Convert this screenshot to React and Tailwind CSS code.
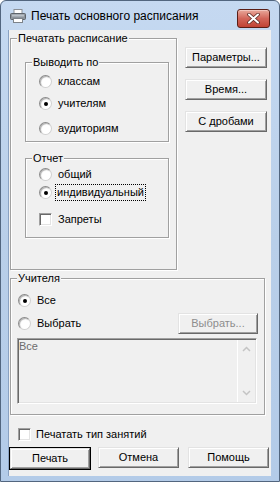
import React from 'react';

const btn =
  'h-[21px] flex items-center justify-center bg-[#f0f0f0] border border-t-[#e3e3e3] border-l-[#e3e3e3] border-r-[#696969] border-b-[#696969] shadow-[inset_1px_1px_0_#fff,inset_-1px_-1px_0_#a0a0a0]';

const groupCls =
  'border border-[#a0a0a0] shadow-[inset_1px_1px_0_#fff,1px_1px_0_#fff] pl-[6px] pr-0 pb-0';

const legendCls = 'px-[1px] bg-[#f0f0f0] leading-[13px]';

const Radio = ({ checked }) => (
  <span className="w-[13px] h-[13px] rounded-full bg-white border border-t-[#8a8a8a] border-l-[#8a8a8a] border-r-[#d0d0d0] border-b-[#d0d0d0] shadow-[inset_1px_1px_1px_#b0b0b0] flex items-center justify-center shrink-0">
    {checked && <span className="w-[4px] h-[4px] rounded-full bg-black" />}
  </span>
);

const Check = () => (
  <span className="w-[13px] h-[13px] bg-white border border-t-[#a0a0a0] border-l-[#a0a0a0] border-r-white border-b-white shadow-[inset_1px_1px_0_#696969,inset_-1px_-1px_0_#e3e3e3] shrink-0" />
);

const Option = ({ checked, children, className = '' }) => (
  <div className={'flex items-center h-[13px] ' + className}>
    <Radio checked={checked} />
    <span className="ml-[6px]">{children}</span>
  </div>
);

const Printer = () => (
  <svg width="16" height="14" viewBox="0 0 16 14">
    <rect x="4" y="0.5" width="8" height="4" fill="#fff" stroke="#8a8f96" />
    <rect x="0.5" y="4.5" width="15" height="6" rx="1" fill="#8d949c" stroke="#5e646b" />
    <rect x="2" y="5.5" width="12" height="2" fill="#b9c0c7" />
    <rect x="3.5" y="9.5" width="9" height="4" fill="#fff" stroke="#7d838a" />
  </svg>
);

export default function App() {
  return (
    <div className="w-[280px] h-[482px] bg-gradient-to-b from-[#c5d9f1] via-[#b9cfe9] to-[#b3cbe8] border border-[#52667f] rounded-t-[6px] flex flex-col font-['Liberation_Sans',Arial,sans-serif] text-[11px] leading-[13px] text-black overflow-hidden">
      <div className="h-[29px] flex items-center pl-[9px] pr-[9px] shrink-0">
        <Printer />
        <span className="ml-[5px] text-[12px] mt-[1px]">Печать основного расписания</span>
        <div className="ml-auto w-[33px] h-[19px] mt-[8px] rounded-[3px] border border-[#5a1e16] bg-gradient-to-b from-[#e8a89b] via-[#d2665a] to-[#c04234] shadow-[inset_0_1px_0_#f2c4bb] flex items-center justify-center self-start">
          <svg width="13" height="11" viewBox="0 0 13 11">
            <path d="M2 1.5 L11 9.5 M11 1.5 L2 9.5" stroke="#5b2a24" strokeWidth="3.6" strokeLinecap="round" />
            <path d="M2 1.5 L11 9.5 M11 1.5 L2 9.5" stroke="#fff" strokeWidth="2" strokeLinecap="round" />
          </svg>
        </div>
      </div>
      <div className="ml-[7px] w-[263px] h-[446px] bg-[#f0f0f0] border-l border-[#8aa2c2] flex flex-col shrink-0">
        <div className="flex">
          <fieldset className={groupCls + ' ml-[1px] mt-[2px] w-[167px] h-[238px]'}>
            <legend className={legendCls}>Печатать расписание</legend>
            <fieldset className={groupCls + ' ml-[8px] mt-[11px] w-[144px] h-[86px]'}>
              <legend className={legendCls}>Выводить по</legend>
              <Option className="ml-[7px] mt-[6px]">классам</Option>
              <Option checked className="ml-[7px] mt-[9px]">учителям</Option>
              <Option className="ml-[7px] mt-[12px]">аудиториям</Option>
            </fieldset>
            <fieldset className={groupCls + ' ml-[8px] mt-[10px] w-[144px] h-[86px]'}>
              <legend className={legendCls}>Отчет</legend>
              <Option className="ml-[7px] mt-[3px]">общий</Option>
              <div className="flex items-center h-[13px] ml-[7px] mt-[5px]">
                <Radio checked />
                <span className="ml-[4px] px-[1px] py-[1px] outline outline-1 outline-dotted outline-black">индивидуальный</span>
              </div>
              <div className="flex items-center h-[13px] ml-[7px] mt-[14px]">
                <Check />
                <span className="ml-[6px]">Запреты</span>
              </div>
            </fieldset>
          </fieldset>
          <div className="ml-[8px] mt-[17px] w-[82px] flex flex-col gap-[11px]">
            <div className={btn}>Параметры...</div>
            <div className={btn}>Время...</div>
            <div className={btn}>С дробами</div>
          </div>
        </div>
        <fieldset className={groupCls + ' ml-[1px] mt-[2px] w-[255px] h-[143px]'}>
          <legend className={legendCls}>Учителя</legend>
          <Option checked className="mt-[9px] ml-[1px]">Все</Option>
          <div className="flex items-center mt-[6px]">
            <Option className="ml-[1px]">Выбрать</Option>
            <div className={btn + ' ml-auto mr-[6px] w-[80px] h-[20px] text-[#8d8d8d]'}>Выбрать...</div>
          </div>
          <div className="mt-[4px] w-[240px] h-[66px] flex border border-t-[#a0a0a0] border-l-[#a0a0a0] border-r-white border-b-white shadow-[inset_1px_1px_0_#696969,inset_-1px_-1px_0_#e3e3e3]">
            <div className="flex-1 pl-[1px] pt-[1px] text-[#6d6d6d]">Все</div>
            <div className="w-[17px] mr-[2px] my-[1px] border-l border-white flex flex-col items-center justify-between py-[6px]">
              <svg width="9" height="6" viewBox="0 0 9 6">
                <path d="M1 5 L4.5 1.5 L8 5" fill="none" stroke="#c4c4c4" strokeWidth="1.5" />
              </svg>
              <svg width="9" height="6" viewBox="0 0 9 6">
                <path d="M1 1 L4.5 4.5 L8 1" fill="none" stroke="#c4c4c4" strokeWidth="1.5" />
              </svg>
            </div>
          </div>
        </fieldset>
        <div className="flex items-center h-[13px] ml-[9px] mt-[13px]">
          <Check />
          <span className="ml-[5px]">Печатать тип занятий</span>
        </div>
        <div className="flex mt-[6px]">
          <div className="w-[82px] border border-black">
            <div className={btn + ' h-[19px]'}>Печать</div>
          </div>
          <div className={btn + ' ml-[7px] w-[81px]'}>Отмена</div>
          <div className={btn + ' ml-[9px] w-[81px]'}>Помощь</div>
        </div>
      </div>
    </div>
  );
}
